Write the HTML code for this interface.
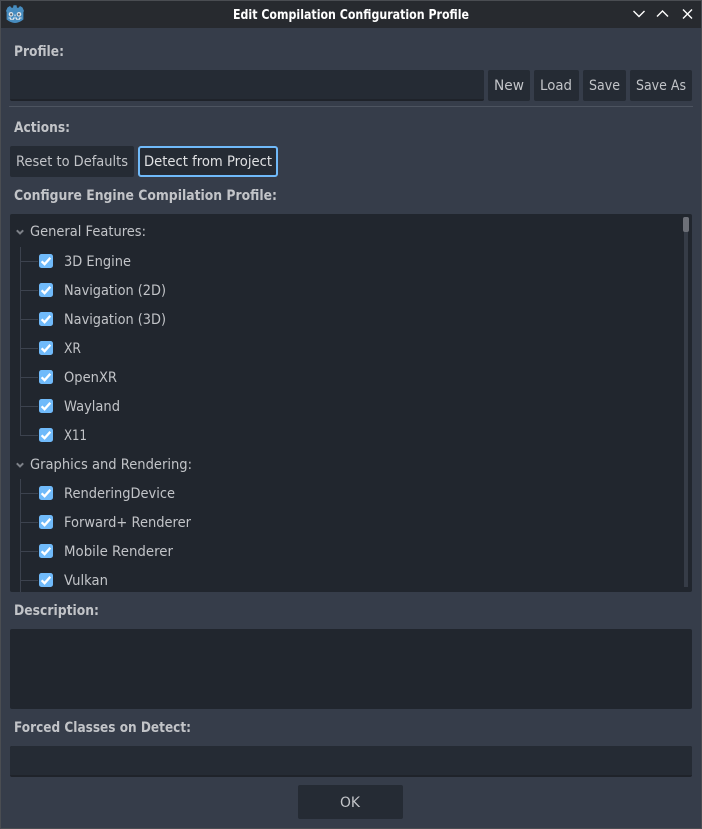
<!DOCTYPE html>
<html><head><meta charset="utf-8"><style>
html,body{margin:0;padding:0;background:#363d4a;width:702px;height:829px;overflow:hidden}
svg{display:block}
text{font-family:"DejaVu Sans",sans-serif;font-size:14px;fill:#c2c4c8}
.b{font-weight:bold;fill:#c2c4c8;font-size:14px}
</style></head><body>
<svg width="702" height="829" viewBox="0 0 702 829" xmlns="http://www.w3.org/2000/svg">
<defs>
<g id="c"><rect x="0" y="0" width="14" height="14" rx="2.5" fill="#70bafa"/><path d="M2.6 7.3 L5.6 10.2 L11.3 3.8" fill="none" stroke="#fff" stroke-width="2.3"/></g>
<clipPath id="tree"><rect x="10" y="214" width="682" height="378"/></clipPath>
</defs>
<rect width="702" height="829" fill="#4a4d52"/>
<rect x="1" y="1" width="700" height="827" fill="#363d4a"/>
<rect x="1" y="1" width="700" height="27" fill="#272a2f"/>
<!-- logo -->
<g>
<path d="M7.5 7.5 L10 6 L11.5 7.8 H13 L13.5 5.3 H16.5 L17 7.8 H18.5 L20 6 L22.5 7.5 L24 11 L23.4 12 V19.5 Q19 23 15 23 Q11 23 6.6 19.5 V12 L6 11 Z" fill="#478cbf"/>
<circle cx="11" cy="14.3" r="2.3" fill="#dfe6ec"/><circle cx="19" cy="14.3" r="2.3" fill="#dfe6ec"/>
<circle cx="11.2" cy="14.4" r="1.1" fill="#55626e"/><circle cx="18.8" cy="14.4" r="1.1" fill="#55626e"/>
<rect x="14.4" y="14.5" width="1.2" height="1.8" fill="#dfe6ec"/>
<path d="M8.5 18 H10.5 V19.3 H13.5 V18 H16.5 V19.3 H19.5 V18 H21.5" fill="none" stroke="#dfe6ec" stroke-width="1"/>
</g>
<text x="233" y="19" class="b" style="fill:#fff;font-size:13px" textLength="236" lengthAdjust="spacingAndGlyphs">Edit Compilation Configuration Profile</text>
<path d="M633.5 11 L639 16.5 L644.5 11 M657 16.5 L662.5 11 L668 16.5 M683 9.5 L692 18.5 M692 9.5 L683 18.5" fill="none" stroke="#fff" stroke-width="1.4"/>

<text x="14" y="56" class="b" textLength="50" lengthAdjust="spacingAndGlyphs">Profile:</text>
<rect x="10" y="70" width="474" height="31" rx="2" fill="#1f232a"/>
<path d="M10 72 Q10 70 12 70 H482 Q484 70 484 72 V99 H10 Z" fill="#252b34"/>
<rect x="488" y="70" width="42" height="31" rx="2" fill="#252b34"/>
<rect x="534" y="70" width="45" height="31" rx="2" fill="#252b34"/>
<rect x="583" y="70" width="43" height="31" rx="2" fill="#252b34"/>
<rect x="630" y="70" width="62" height="31" rx="2" fill="#252b34"/>
<text x="494" y="90" textLength="30" lengthAdjust="spacingAndGlyphs">New</text>
<text x="540" y="90" textLength="32" lengthAdjust="spacingAndGlyphs">Load</text>
<text x="589" y="90" textLength="31" lengthAdjust="spacingAndGlyphs">Save</text>
<text x="636" y="90" textLength="50" lengthAdjust="spacingAndGlyphs">Save As</text>
<rect x="9" y="106" width="684" height="1" fill="#4d5460"/>

<text x="14" y="132" class="b" textLength="56" lengthAdjust="spacingAndGlyphs">Actions:</text>
<rect x="10" y="146" width="124" height="31" rx="2" fill="#252b34"/>
<text x="16" y="166" textLength="112" lengthAdjust="spacingAndGlyphs">Reset to Defaults</text>
<rect x="139" y="147" width="138" height="29" rx="2" fill="#252b34" stroke="#70bafa" stroke-width="2"/>
<text x="144" y="166" style="fill:#e0e1e3" textLength="128" lengthAdjust="spacingAndGlyphs">Detect from Project</text>
<text x="14" y="200" class="b" textLength="263" lengthAdjust="spacingAndGlyphs">Configure Engine Compilation Profile:</text>

<rect x="10" y="214" width="682" height="378" rx="2" fill="#21262e"/>
<g clip-path="url(#tree)">
<path d="M20.5 247 V435.5 H38 M20.5 261.5 H38 M20.5 290.5 H38 M20.5 319.5 H38 M20.5 348.5 H38 M20.5 377.5 H38 M20.5 406.5 H38 M20.5 479 V592 M20.5 493.5 H38 M20.5 522.5 H38 M20.5 551.5 H38 M20.5 580.5 H38" fill="none" stroke="#3c424e" stroke-width="1"/>
<path d="M16.8 230.3 L20 233.5 L23.2 230.3 M16.8 463.3 L20 466.5 L23.2 463.3" fill="none" stroke="#7d8188" stroke-width="2"/>
<text x="30" y="236" textLength="116" lengthAdjust="spacingAndGlyphs">General Features:</text>
<use href="#c" x="39" y="254"/><text x="64" y="266" textLength="67" lengthAdjust="spacingAndGlyphs">3D Engine</text>
<use href="#c" x="39" y="283"/><text x="64" y="295" textLength="102" lengthAdjust="spacingAndGlyphs">Navigation (2D)</text>
<use href="#c" x="39" y="312"/><text x="64" y="324" textLength="102" lengthAdjust="spacingAndGlyphs">Navigation (3D)</text>
<use href="#c" x="39" y="341"/><text x="64" y="353" textLength="17" lengthAdjust="spacingAndGlyphs">XR</text>
<use href="#c" x="39" y="370"/><text x="64" y="382" textLength="53" lengthAdjust="spacingAndGlyphs">OpenXR</text>
<use href="#c" x="39" y="399"/><text x="64" y="411" textLength="56" lengthAdjust="spacingAndGlyphs">Wayland</text>
<use href="#c" x="39" y="428"/><text x="64" y="440" textLength="23" lengthAdjust="spacingAndGlyphs">X11</text>
<text x="30" y="469" textLength="162" lengthAdjust="spacingAndGlyphs">Graphics and Rendering:</text>
<use href="#c" x="39" y="486"/><text x="64" y="498" textLength="111" lengthAdjust="spacingAndGlyphs">RenderingDevice</text>
<use href="#c" x="39" y="515"/><text x="64" y="527" textLength="127" lengthAdjust="spacingAndGlyphs">Forward+ Renderer</text>
<use href="#c" x="39" y="544"/><text x="64" y="556" textLength="109" lengthAdjust="spacingAndGlyphs">Mobile Renderer</text>
<use href="#c" x="39" y="573"/><text x="64" y="585" textLength="44" lengthAdjust="spacingAndGlyphs">Vulkan</text>
</g>
<rect x="684" y="217" width="4" height="370" fill="#363c47"/>
<rect x="683" y="217" width="6" height="15" rx="2" fill="#6d7078"/>

<text x="14" y="615" class="b" textLength="85" lengthAdjust="spacingAndGlyphs">Description:</text>
<rect x="10" y="629" width="682" height="80" rx="2" fill="#21262e"/>
<text x="14" y="732" class="b" textLength="177" lengthAdjust="spacingAndGlyphs">Forced Classes on Detect:</text>
<rect x="10" y="746" width="682" height="31" rx="2" fill="#1f232a"/>
<path d="M10 748 Q10 746 12 746 H690 Q692 746 692 748 V775 H10 Z" fill="#252b34"/>
<rect x="298" y="785" width="105" height="34" rx="2" fill="#252b34"/>
<text x="340" y="807" textLength="20" lengthAdjust="spacingAndGlyphs">OK</text>
</svg>
</body></html>
